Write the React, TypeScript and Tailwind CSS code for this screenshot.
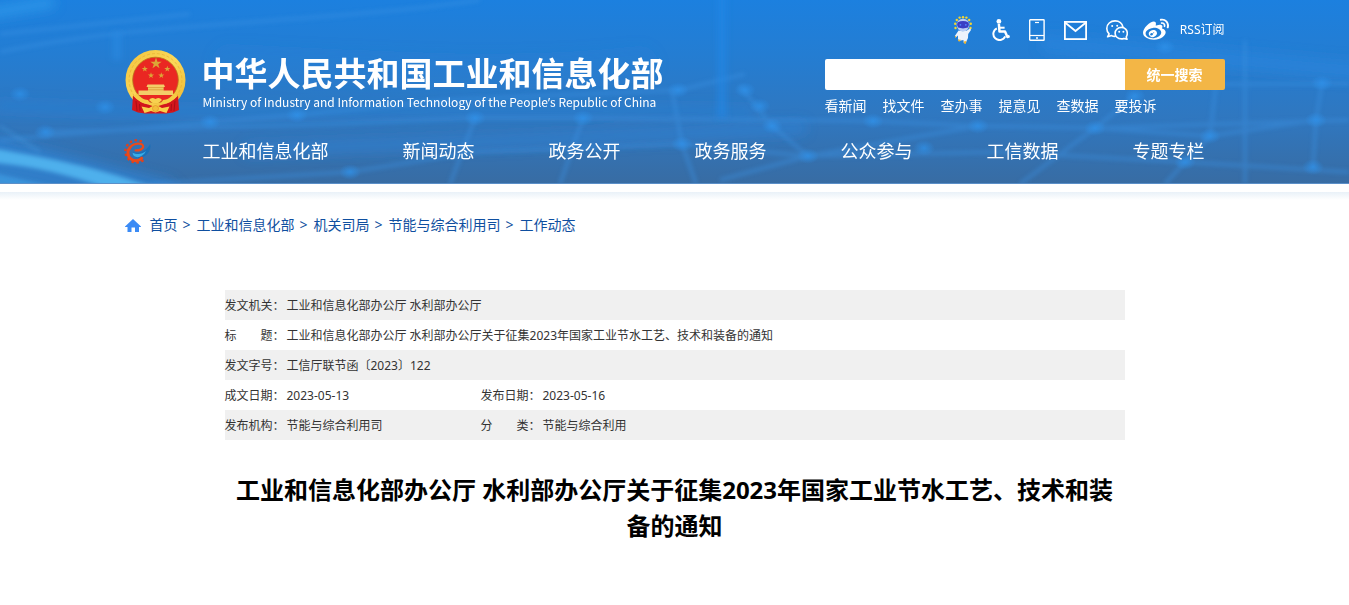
import React from "react";
import { FaWeibo } from "react-icons/fa";

const NAV = ["工业和信息化部", "新闻动态", "政务公开", "政务服务", "公众参与", "工信数据", "专题专栏"];
const QUICK = ["看新闻", "找文件", "查办事", "提意见", "查数据", "要投诉"];
const CRUMBS = ["首页", "工业和信息化部", "机关司局", "节能与综合利用司", "工作动态"];

const NODES = [
  [210, 122], [297, 115], [475, 118], [583, 118], [350, 172], [682, 144], [772, 126], [760, 106], [678, 90],
  [808, 156], [873, 121], [978, 126], [924, 148], [1095, 128], [1135, 96], [1210, 136], [1185, 162],
  [1316, 120], [1313, 167], [1322, 83], [20, 94], [105, 107], [1165, 47], [45, 132], [745, 90],
];

const ROUTES = [
  "M0 140 L210 122 L297 115 L450 100 L680 90 L745 74",
  "M45 132 L330 124 L475 118 L583 118 L873 121 L978 126 L1095 128 L1349 120",
  "M150 184 L350 172 L475 152 L682 144 L808 156 L1000 152 L1185 162 L1349 172",
  "M682 144 L672 90",
  "M682 144 L696 184",
  "M772 126 L740 86",
  "M772 126 L808 156 L720 180",
  "M475 118 L450 184",
  "M583 118 L560 184",
  "M1095 128 L1020 184",
  "M978 126 L808 156",
  "M1210 136 L1095 128 L1135 96",
  "M1210 136 L1216 84",
  "M1185 162 L1165 184",
  "M1210 136 L1316 120 L1322 83",
  "M1316 120 L1313 167",
  "M1185 162 L1210 136",
  "M1100 84 L1349 84",
  "M1245 40 V184",
];

function Backdrop() {
  return (
    <svg className="absolute inset-0 h-full w-full" viewBox="0 0 1349 184" preserveAspectRatio="none" aria-hidden="true">
      <defs>
        <linearGradient id="sky" x1="0" y1="0" x2="0" y2="1">
          <stop offset="0" stopColor="#1c80df" />
          <stop offset="0.3" stopColor="#247dd2" />
          <stop offset="0.65" stopColor="#3077bf" />
          <stop offset="1" stopColor="#386ca3" />
        </linearGradient>
        <radialGradient id="dot">
          <stop offset="0" stopColor="#2f93ec" stopOpacity="0.7" />
          <stop offset="1" stopColor="#2f93ec" stopOpacity="0" />
        </radialGradient>
        <filter id="soft" x="-10%" y="-50%" width="120%" height="200%">
          <feGaussianBlur stdDeviation="2" />
        </filter>
        <filter id="beam" filterUnits="userSpaceOnUse" x="0" y="-20" width="1349" height="224">
          <feGaussianBlur stdDeviation="3" />
        </filter>
        <filter id="softer" filterUnits="userSpaceOnUse" x="-40" y="-40" width="1430" height="264">
          <feGaussianBlur stdDeviation="6" />
        </filter>
      </defs>
      <rect width="1349" height="184" fill="url(#sky)" />
      <g filter="url(#softer)" fill="none" stroke="#2d88e0" strokeLinecap="round">
        <path d="M230 62 C400 70 520 78 640 64" strokeWidth="36" opacity="0.15" />
        <path d="M0 106 C300 120 500 104 750 112" strokeWidth="12" opacity="0.35" />
        <path d="M250 150 C450 142 600 140 800 128" strokeWidth="14" opacity="0.4" />
        <path d="M1050 44 L1370 72" strokeWidth="20" opacity="0.5" />
        <path d="M-20 156 L160 200" strokeWidth="44" opacity="0.6" />
        <path d="M-10 13 L50 3" strokeWidth="10" stroke="#35a0ee" opacity="0.7" />
      </g>
      <g filter="url(#soft)" fill="none" stroke="#3c93e4" strokeWidth="4" opacity="0.42">
        {ROUTES.map((d) => (
          <path key={d} d={d} />
        ))}
        <path d="M0 52 C150 20 320 24 480 0" />
        <path d="M0 34 L190 14" />
      </g>
      <path d="M722 -20 V118" stroke="#2288e6" strokeWidth="10" opacity="0.6" filter="url(#beam)" />
      <path d="M117 32 V60" stroke="#2d8fe6" strokeWidth="9" opacity="0.5" filter="url(#beam)" />
      {NODES.map(([x, y]) => (
        <ellipse key={`${x}-${y}`} cx={x} cy={y} rx="11" ry="8" fill="url(#dot)" />
      ))}
      <g filter="url(#soft)">
        <path d="M-10 148 C50 158 100 168 155 188 L105 188 C70 174 30 166 -10 162 Z" fill="#53b9f2" opacity="0.85" />
        <path d="M-10 172 L60 188 H-10 Z" fill="#3fa5ec" opacity="0.6" />
        <path d="M0 126 L40 152" stroke="#4aa6ec" strokeWidth="2" opacity="0.5" />
      </g>
      <rect y="183" width="1349" height="1" fill="#5b8fc8" />
    </svg>
  );
}

const STAR = "M0-10 L2.35-3.1 9.5-3.1 3.7 1.2 5.9 8.1 0 3.9-5.9 8.1-3.7 1.2-9.5-3.1-2.35-3.1Z";

function Emblem() {
  return (
    <svg className="h-16 w-[61px] shrink-0" viewBox="0 0 61 64" role="img" aria-label="国徽">
      <defs>
        <linearGradient id="gold" x1="0" y1="0" x2="1" y2="1">
          <stop offset="0" stopColor="#f3c33c" />
          <stop offset="0.5" stopColor="#fbd85a" />
          <stop offset="1" stopColor="#eeb42c" />
        </linearGradient>
      </defs>
      <circle cx="30.5" cy="30" r="30" fill="url(#gold)" />
      <circle cx="30.5" cy="30" r="26.4" fill="none" stroke="#dfa32a" strokeWidth="1" strokeDasharray="3 2" opacity="0.5" />
      <circle cx="30.5" cy="30" r="22.8" fill="#ea2722" stroke="#b9741b" strokeWidth="0.8" />
      <g fill="#dca637">
        <path d={STAR} transform="translate(31 13.5) scale(0.6)" />
        <path d={STAR} transform="translate(19.8 19) scale(0.32)" />
        <path d={STAR} transform="translate(42.3 19) scale(0.32)" />
        <path d={STAR} transform="translate(26 25.5) scale(0.32)" />
        <path d={STAR} transform="translate(36.3 25.5) scale(0.32)" />
      </g>
      <path d="M22.5 34.5 H39 L40 37 H38.6 V40.5 H48 V45 H13.5 V40.5 H23 V37 H21.5Z" fill="#f3cd68" />
      <path d="M22.8 37.6 H38.6 M23 39.8 H38.6" stroke="#d4942d" strokeWidth="0.7" />
      <path d="M8 45.5 Q15 53 23 54.5 L30.5 57 38 54.5 Q46 53 53 45.5 L54 60 48 62.5 41 63.5 H20 L13 62.5 7 60Z" fill="#d3151c" />
      <path d="M8.5 46 Q16 54.5 25 53.5 L23 50 Q16 49.5 12 43.5Z M52.5 46 Q45 54.5 36 53.5 L38 50 Q45 49.5 49 43.5Z" fill="#f6cb45" />
      <path d="M24 50 Q26.5 46.5 30.5 49 Q34.5 46.5 37 50 Q33 54 30.5 53.5 Q28 54 24 50Z" fill="#f7d14f" />
      <path d="M11 51 L12 61 M50 51 L49 61 M14.5 54 L15 61 M46.5 54 L46 61" stroke="#a50d14" strokeWidth="0.9" />
      <path d="M16.5 56.5 L24 58 30.5 54.5 37 58 44.5 56.5 41.5 63 35 61 30.5 62.5 26 61 19.5 63Z" fill="#f9d04a" />
      <circle cx="30.5" cy="58.5" r="3" fill="#f4bd3a" stroke="#da8d22" strokeWidth="0.6" />
    </svg>
  );
}

function GearE() {
  return (
    <svg className="-ml-0.5 h-6 w-7 overflow-visible" viewBox="0 0 28 24" aria-hidden="true">
      <g fill="#e0401c">
        {[58, 84, 110, 136, 162, 188, 214, 240, 266, 292].map((a) => (
          <rect key={a} x="23.4" y="11.1" width="2.4" height="2.6" rx="0.6" transform={`rotate(${a} 13.5 12.4)`} />
        ))}
      </g>
      <path d="M9.6 12.8 C15 15.4 23.4 12.8 27.2 5 C29 12 22 19.6 14.8 19 C10.8 18.6 9.2 16 9.6 12.8Z" fill="#1a70b8" />
      <path d="M9.6 13.4 C14 16 19.5 15 23 12 C20.6 17 15.6 19 12.6 17.8 C10.6 17 9.6 15.4 9.6 13.4Z" fill="#38aee8" />
      <g fill="none" stroke="#ea4a1a" strokeLinecap="round">
        <path d="M18.6 19.2 A7.6 7.6 0 0 1 7 8.6" strokeWidth="3" />
        <path d="M7 8.6 C10.6 3.6 20.2 3.4 20.2 7.6 C20.2 10.4 16 11.6 12.6 11.4" strokeWidth="2.2" />
      </g>
    </svg>
  );
}

function Mascot() {
  return (
    <svg className="h-7 w-[18px]" viewBox="0 0 18 28" aria-hidden="true">
      <g fill="#f7d52c">
        {[[1.5, 12], [1.2, 7.8], [2.8, 4], [5.6, 1.6], [9, 1.2], [12.4, 1.6], [15.2, 4], [16.8, 7.8], [16.5, 12]].map(([x, y]) => (
          <circle key={`${x}-${y}`} cx={x} cy={y} r="1.2" />
        ))}
      </g>
      <circle cx="9" cy="9" r="6.3" fill="#b9cdf5" />
      <path d="M3.4 6.5 Q9 3.6 14.6 6.5 Q15.6 9 14 11.6 Q9 13.2 4 11.6 Q2.4 9 3.4 6.5Z" fill="#3a3fc4" />
      <circle cx="6.4" cy="8.8" r="0.9" fill="#4f86ff" />
      <circle cx="11.8" cy="8.8" r="0.9" fill="#4f86ff" />
      <path d="M4.6 14.5 Q9 16 13 14.5 L16.2 12.2 17 14 14.2 18 Q14.6 22 12.6 25 L11.8 27.2 9.8 27 9.4 24 7 24.6 5.2 25 4 23 4 19.5 1.8 21.4 1 19.8Z" fill="#eef3fc" />
      <path d="M9.8 25.4 L12.4 25 11.8 27.8 10 27.4Z M3.8 23.5 L6.8 23.8 6 25.4 4.4 25.2Z M0.8 19.8 L2.4 20.6 1.4 22Z" fill="#eeb52f" />
    </svg>
  );
}

function Wheelchair() {
  return (
    <svg className="h-[22px] w-[18px]" viewBox="0 0 18 22" fill="none" aria-hidden="true">
      <circle cx="6.9" cy="2.4" r="2.4" fill="#fff" />
      <path d="M6.9 5 L7.5 12.6 H13 L15.4 18 17.6 17" stroke="#fff" strokeWidth="2.5" strokeLinejoin="round" />
      <path d="M7 8.7 H12.6" stroke="#fff" strokeWidth="2" />
      <path d="M4.8 9.3 A6.2 6.2 0 1 0 13.2 17.4" stroke="#fff" strokeWidth="2" />
    </svg>
  );
}

function Phone() {
  return (
    <svg className="h-[22px] w-4" viewBox="0 0 16 22" fill="none" stroke="#fff" aria-hidden="true">
      <rect x="0.7" y="0.7" width="14.4" height="20.6" rx="0.6" strokeWidth="1.4" />
      <path d="M6 3.5 H10" strokeWidth="1.2" />
      <path d="M1 16.5 H15" strokeWidth="1.2" />
      <circle cx="8" cy="19" r="1" fill="#fff" stroke="none" />
    </svg>
  );
}

function Mail() {
  return (
    <svg className="h-[19px] w-[23px]" viewBox="0 0 23 19" fill="none" stroke="#fff" strokeWidth="1.8" aria-hidden="true">
      <rect x="0.9" y="0.9" width="21.2" height="17.2" />
      <path d="M1 1.5 L11.5 10 L22 1.5" />
    </svg>
  );
}

function WeChat() {
  return (
    <svg className="h-5 w-[22px]" viewBox="0 0 22 20" fill="none" stroke="#fff" strokeWidth="1.6" strokeLinejoin="round" aria-hidden="true">
      <path d="M17 7.2 C16.4 3.5 13.2 0.9 9.1 0.9 C4.5 0.9 0.8 4 0.8 8.4 C0.8 10.8 1.6 12.4 3.1 13.8 L1.6 16.8 L5.6 15.6 C6.8 16.3 8.6 16.5 9.8 16.3" />
      <path d="M15.4 7.4 C11.8 7.4 9.1 10 9.1 13.2 C9.1 16.4 11.8 18.9 15.4 18.9 C16.4 18.9 17.3 18.7 18 18.4 L21 19.2 L20.2 16.9 C21 15.9 21.3 14.6 21.3 13.2 C21.3 10 18.8 7.4 15.4 7.4Z" />
      <g fill="#fff" stroke="none">
        <circle cx="6.2" cy="6.1" r="1" />
        <circle cx="11.2" cy="5.8" r="1" />
        <circle cx="13.2" cy="11.8" r="1" />
        <circle cx="17.4" cy="11.8" r="1" />
      </g>
    </svg>
  );
}

function Home() {
  return (
    <svg className="h-[13px] w-4" viewBox="0 0 16 13" fill="#3b8bf5" aria-hidden="true">
      <path d="M8 0 L16 7.5 V8 H14 V13 H10 V8.5 H6.5 V13 H2.5 V8 H0 V7.5Z" />
    </svg>
  );
}

export default function App() {
  return (
    <div className="min-h-screen bg-white font-['Noto_Sans','Noto_Sans_CJK_SC',sans-serif] text-[#333]">
      <header className="relative">
        <Backdrop />
        <div className="relative mx-auto max-w-[1100px]">
          <div className="flex justify-between">
            <a href="#" className="flex items-start gap-4 pt-[50px] text-white">
              <Emblem />
              <span className="flex flex-col gap-1 pt-1 font-['Noto_Sans_CJK_SC',sans-serif] whitespace-nowrap">
                <span className="text-[33px] leading-9 font-bold">中华人民共和国工业和信息化部</span>
                <span lang="en" className="pl-px text-xs">
                  Ministry of Industry and Information Technology of the People
                  <span className="font-['Noto_Sans',sans-serif]">’</span>s Republic of China
                </span>
              </span>
            </a>
            <div className="w-[400px] pt-4 text-white">
              <div className="flex h-7 items-center justify-end whitespace-nowrap">
                <a href="#" aria-label="智能问答" className="mr-5"><Mascot /></a>
                <a href="#" aria-label="无障碍" className="mr-[19px]"><Wheelchair /></a>
                <a href="#" aria-label="手机版" className="mr-[19px]"><Phone /></a>
                <a href="#" aria-label="邮箱" className="mr-[19px]"><Mail /></a>
                <a href="#" aria-label="微信" className="mr-[15px]"><WeChat /></a>
                <a href="#" aria-label="微博" className="mr-[11px]"><FaWeibo className="size-[26px]" /></a>
                <a href="#" className="text-xs">RSS订阅</a>
              </div>
              <form className="mt-[15px] flex h-[31px]" onSubmit={(e) => e.preventDefault()}>
                <input type="text" aria-label="搜索" className="min-w-0 flex-1 rounded-l-xs bg-white px-2 text-sm text-[#333] outline-none" />
                <button type="submit" className="w-[100px] rounded-r-xs bg-[#f3b646] text-sm font-bold text-white">统一搜索</button>
              </form>
              <div className="mt-[6px] flex gap-4 text-sm leading-5">
                {QUICK.map((q) => (
                  <a key={q} href="#">{q}</a>
                ))}
              </div>
            </div>
          </div>
          <nav className="mt-[10px] flex h-[58px] items-center pr-5 pb-2 text-lg text-white">
            <a href="#" aria-label="工信门户" className="w-[78px]"><GearE /></a>
            <div className="flex flex-1 justify-between whitespace-nowrap">
              {NAV.map((n) => (
                <a key={n} href="#">{n}</a>
              ))}
            </div>
          </nav>
        </div>
      </header>
      <div className="mt-2 h-2 bg-linear-to-b from-[#e9f1f8] to-white" />

      <main className="mx-auto max-w-[1100px]">
        <nav aria-label="当前位置" className="flex h-[50px] items-center text-sm text-[#0f4fa0]">
          <span className="mr-[9px]"><Home /></span>
          {CRUMBS.map((c, i) => (
            <React.Fragment key={c}>
              {i > 0 && <span className="mr-[6px] ml-[5px]">&gt;</span>}
              <a href="#">{c}</a>
            </React.Fragment>
          ))}
        </nav>

        <div className="mx-auto mt-10 max-w-[900px]">
          <table className="w-full table-fixed border-collapse text-left text-xs whitespace-nowrap [&_td]:pt-0.5 [&_th]:pt-0.5 [&_th]:font-normal [&_tr]:h-[30px] [&_tr:nth-child(odd)]:bg-[#f0f0f0]">
            <colgroup>
              <col className="w-[62px]" />
              <col className="w-[194px]" />
              <col className="w-[62px]" />
              <col />
            </colgroup>
            <tbody>
              <tr><th scope="row">发文机关：</th><td colSpan={3}>工业和信息化部办公厅 水利部办公厅</td></tr>
              <tr><th scope="row">标　　题：</th><td colSpan={3}>工业和信息化部办公厅 水利部办公厅关于征集2023年国家工业节水工艺、技术和装备的通知</td></tr>
              <tr><th scope="row">发文字号：</th><td colSpan={3}>工信厅联节函〔2023〕122</td></tr>
              <tr><th scope="row">成文日期：</th><td>2023-05-13</td><th scope="row">发布日期：</th><td>2023-05-16</td></tr>
              <tr><th scope="row">发布机构：</th><td>节能与综合利用司</td><th scope="row">分　　类：</th><td>节能与综合利用</td></tr>
            </tbody>
          </table>
          <h1 className="mt-8 text-center text-2xl leading-9 font-bold text-black">
            工业和信息化部办公厅 水利部办公厅关于征集2023年国家工业节水工艺、技术和装备的通知
          </h1>
        </div>
      </main>
    </div>
  );
}
